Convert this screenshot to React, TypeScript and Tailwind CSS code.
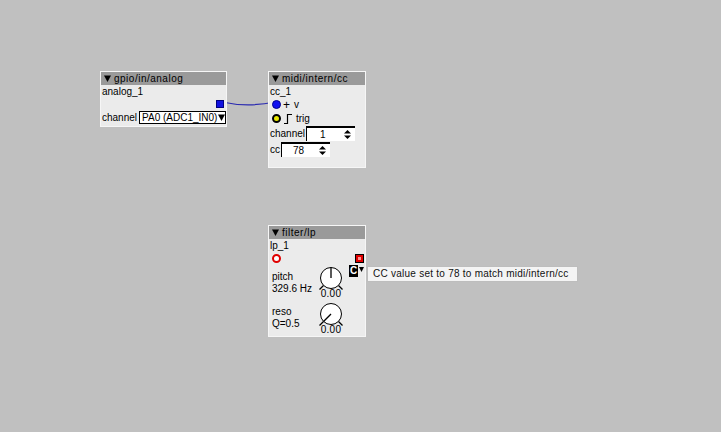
import React from "react";

const font = { fontFamily: '"Liberation Sans", Arial, sans-serif' };

function Header({ title }: { title: string }) {
  return (
    <div className="h-[13px] bg-[#9a9a9a] flex items-center pl-[3px] text-[10px] leading-none text-black whitespace-nowrap tracking-[0.5px]">
      <svg width="7" height="7" viewBox="0 0 7 7" className="mr-[3px]">
        <polygon points="0,0.5 7,0.5 3.5,7" fill="#000" />
      </svg>
      <span>{title}</span>
    </div>
  );
}

function Spinner() {
  return (
    <svg width="7" height="9" viewBox="0 0 7 9">
      <polygon points="3.5,0 7,3.5 0,3.5" fill="#000" />
      <polygon points="0,5.5 7,5.5 3.5,9" fill="#000" />
    </svg>
  );
}

function Knob({ angle }: { angle: number }) {
  const r = 10.5;
  const cx = 13;
  const cy = 12;
  const a = (angle * Math.PI) / 180;
  const x2 = cx + Math.sin(a) * r;
  const y2 = cy - Math.cos(a) * r;
  return (
    <svg width="26" height="26" viewBox="0 0 26 26">
      <circle cx={cx} cy={cy} r={r} fill="#fff" stroke="#000" strokeWidth="1" />
      <line x1={cx} y1={cy} x2={x2} y2={y2} stroke="#000" strokeWidth="1.3" />
      <line x1="5.5" y1="19.5" x2="1.5" y2="23.5" stroke="#000" strokeWidth="1.2" />
      <line x1="20.5" y1="19.5" x2="24.5" y2="23.5" stroke="#000" strokeWidth="1.2" />
    </svg>
  );
}

export default function App() {
  return (
    <div
      className="relative w-[721px] h-[432px] bg-[#c0c0c0] overflow-hidden text-black"
      style={font}
    >
      {/* wire */}
      <svg className="absolute left-0 top-0" width="721" height="432">
        <path d="M222 102 C 240 106, 256 106, 275 102" stroke="#2b2bb0" strokeWidth="1.2" fill="none" />
      </svg>

      {/* gpio/in/analog */}
      <div className="absolute left-[100px] top-[71px] w-[127px] h-[56px] bg-[#ebebeb] border border-[#f6f6f6] flex flex-col whitespace-nowrap">
        <Header title="gpio/in/analog" />
        <div className="text-[10px] leading-[12px] pl-[1px] mt-[1px]">analog_1</div>
        <div className="flex justify-end pr-[2px] mt-[2px]">
          <div className="w-[8px] h-[8px] bg-[#1010e0] border border-[#000080]" />
        </div>
        <div className="flex items-center mt-[3px] pl-[1px] text-[10px] leading-none">
          <span>channel</span>
          <div className="ml-[2px] h-[13px] w-[88px] border border-black bg-white flex items-center pl-[2px]">
            <span>PA0 (ADC1_IN0)</span>
            <svg width="7" height="7" viewBox="0 0 7 7" className="ml-[1px]">
              <polygon points="0,0.5 7,0.5 3.5,7" fill="#000" />
            </svg>
          </div>
        </div>
      </div>

      {/* midi/intern/cc */}
      <div className="absolute left-[268px] top-[71px] w-[98px] h-[97px] bg-[#ebebeb] border border-[#f6f6f6] flex flex-col whitespace-nowrap">
        <Header title="midi/intern/cc" />
        <div className="text-[10px] leading-[12px] pl-[1px] mt-[1px]">cc_1</div>
        <div className="flex items-center pl-[3px] mt-[1px] h-[11px] text-[10px] leading-none">
          <div className="w-[9px] h-[9px] rounded-full bg-[#1010f0] border border-[#000090]" />
          <span className="ml-[2px] text-[12px]">+</span>
          <span className="ml-[4px]">v</span>
        </div>
        <div className="flex items-center pl-[3px] mt-[3px] h-[11px] text-[10px] leading-none">
          <div className="w-[9px] h-[9px] rounded-full bg-[#e8e800] border-[2px] border-black" />
          <svg width="10" height="10" viewBox="0 0 10 10" className="ml-[2px]">
            <path d="M1 9.5 H4.5 V0.5 H9" stroke="#000" strokeWidth="1.2" fill="none" />
          </svg>
          <span className="ml-[3px]">trig</span>
        </div>
        <div className="flex items-center mt-[2px] pl-[1px] text-[10px] leading-none">
          <span>channel</span>
          <div className="ml-[1px] h-[15px] w-[49px] bg-white border-t-[2px] border-l border-black flex items-center justify-between pl-[13px] pr-[4px]">
            <span>1</span>
            <Spinner />
          </div>
        </div>
        <div className="flex items-center mt-[1px] pl-[1px] text-[10px] leading-none">
          <span>cc</span>
          <div className="ml-[1px] h-[15px] w-[49px] bg-white border-t-[2px] border-l border-black flex items-center justify-between pl-[11px] pr-[4px]">
            <span>78</span>
            <Spinner />
          </div>
        </div>
      </div>

      {/* filter/lp */}
      <div className="absolute left-[268px] top-[225px] w-[98px] h-[112px] bg-[#ebebeb] border border-[#f6f6f6] flex flex-col whitespace-nowrap">
        <Header title="filter/lp" />
        <div className="text-[10px] leading-[12px] pl-[1px] mt-[1px]">lp_1</div>
        <div className="flex items-center justify-between pl-[3px] pr-[1px] mt-[1px] h-[10px]">
          <div className="w-[9px] h-[9px] rounded-full bg-white border-[2px] border-[#e00000]" />
          <div className="w-[9px] h-[9px] bg-[#e00000] border border-black flex items-center justify-center">
            <div className="w-[3px] h-[3px] bg-[#ff9090]" />
          </div>
        </div>
        <div className="flex items-start pl-[3px] pr-[1px] mt-[2px]">
          <div className="flex-1 text-[10px] leading-[12px] mt-[6px]">
            <div>pitch</div>
            <div>329.6 Hz</div>
          </div>
          <div className="flex flex-col items-center mt-[1px]">
            <Knob angle={0} />
            <div className="text-[10px] leading-[10px] -mt-[3px] tracking-[0.3px]">0.00</div>
          </div>
          <div className="w-[20px] flex justify-end">
            <div className="flex items-start h-[12px]">
              <div className="h-[12px] w-[9px] bg-black text-white text-[10px] leading-[12px] text-center font-bold">C</div>
              <svg width="5" height="5" viewBox="0 0 5 5" className="ml-[1px] mt-[2px]">
                <polygon points="0,0 5,0 2.5,5" fill="#000" />
              </svg>
            </div>
          </div>
        </div>
        <div className="flex items-start pl-[3px] pr-[1px] mt-[3px]">
          <div className="flex-1 text-[10px] leading-[12px] mt-[4px]">
            <div>reso</div>
            <div>Q=0.5</div>
          </div>
          <div className="flex flex-col items-center">
            <Knob angle={-135} />
            <div className="text-[10px] leading-[10px] -mt-[3px] tracking-[0.3px]">0.00</div>
          </div>
          <div className="w-[20px]" />
        </div>
      </div>

      {/* tooltip */}
      <div className="absolute left-[367px] top-[266px] w-[211px] h-[16px] bg-[#f4f4f4] border border-[#bdbdbd] flex items-center pl-[5px] text-[10px] leading-none tracking-[0.25px] whitespace-nowrap text-[#111]">
        CC value set to 78 to match midi/intern/cc
      </div>
    </div>
  );
}
